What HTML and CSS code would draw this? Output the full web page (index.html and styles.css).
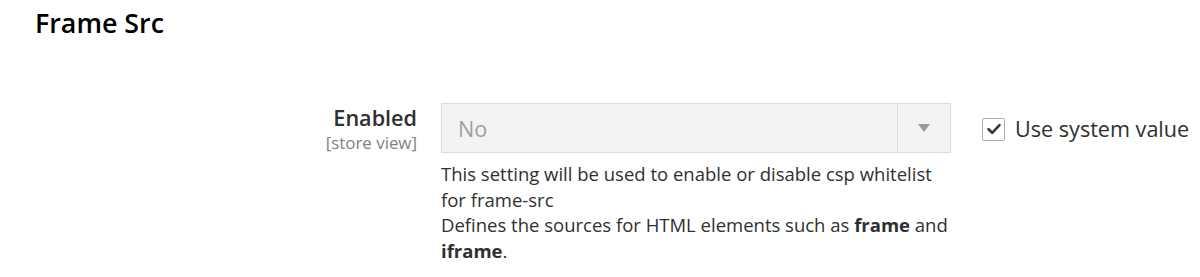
FILE: index.html
```html
<!DOCTYPE html>
<html>
<head>
<meta charset="utf-8">
<link rel="stylesheet" href="styles.css">
</head>
<body>
<div class="page">
  <h2 class="section-title">Frame Src</h2>
  <div class="field-row">
    <div class="field-label">
      <span class="label-text">Enabled</span>
      <span class="scope">[store view]</span>
    </div>
    <div class="field-control">
      <div class="select">
        <span class="select-value">No</span>
        <span class="select-arrow"><span class="triangle"></span></span>
      </div>
      <p class="note">This setting will be used to enable or disable csp whitelist for frame-src<br>Defines the sources for HTML elements such as <strong>frame</strong> and <strong>iframe</strong>.</p>
    </div>
    <label class="use-default">
      <span class="checkbox">
        <svg width="16" height="16" viewBox="0 0 16 16"><path d="M2.5 8.2 L6.2 11.8 L13.5 4.2" fill="none" stroke="#41362f" stroke-width="2.6" stroke-linecap="round" stroke-linejoin="round"/></svg>
      </span>
      <span class="use-text">Use system value</span>
    </label>
  </div>
</div>
</body>
</html>
```

FILE: styles.css
```css
html, body {
  margin: 0;
  padding: 0;
  background: #ffffff;
}
body {
  font-family: "Open Sans", "Liberation Sans", sans-serif;
  color: #303030;
}
.page {
  padding: 0 0 0 35px;
}
.section-title {
  margin: 0;
  padding-top: 4px;
  font-size: 26.8px;
  font-weight: 600;
  line-height: 38px;
  color: #000000;
}
.field-row {
  display: flex;
  align-items: flex-start;
  margin-top: 61px;
}
.field-label {
  width: 382px;
  display: flex;
  flex-direction: column;
  align-items: flex-end;
  padding-top: 0;
}
.label-text {
  font-size: 21.6px;
  font-weight: 600;
  line-height: 30px;
  color: #303030;
}
.scope {
  font-size: 16.9px;
  line-height: 20px;
  color: #808080;
}
.field-control {
  width: 510px;
  margin-left: 24px;
}
.select {
  box-sizing: border-box;
  height: 50px;
  display: flex;
  align-items: stretch;
  border: 1px solid #dcdcdc;
  background: #f3f3f3;
}
.select-value {
  flex: 1;
  display: flex;
  align-items: center;
  padding-left: 16px;
  font-size: 21.6px;
  color: #a0a0a0;
}
.select-arrow {
  width: 52px;
  border-left: 1px solid #dcdcdc;
  display: flex;
  align-items: center;
  justify-content: center;
}
.triangle {
  width: 0;
  height: 0;
  border-left: 6px solid transparent;
  border-right: 6px solid transparent;
  border-top: 8px solid #9a9a9a;
}
.note {
  margin: 8px 0 0;
  font-size: 18.5px;
  line-height: 25.7px;
  color: #303030;
}
.note strong {
  font-weight: 700;
}
.use-default {
  display: flex;
  align-items: center;
  margin-left: 31px;
  margin-top: 13px;
  gap: 10px;
}
.checkbox {
  box-sizing: border-box;
  width: 23px;
  height: 23px;
  border: 1px solid #adadad;
  border-radius: 2px;
  background: #fff;
  display: flex;
  align-items: center;
  justify-content: center;
}
.use-text {
  font-size: 21.6px;
  color: #303030;
  line-height: 26px;
}
```
